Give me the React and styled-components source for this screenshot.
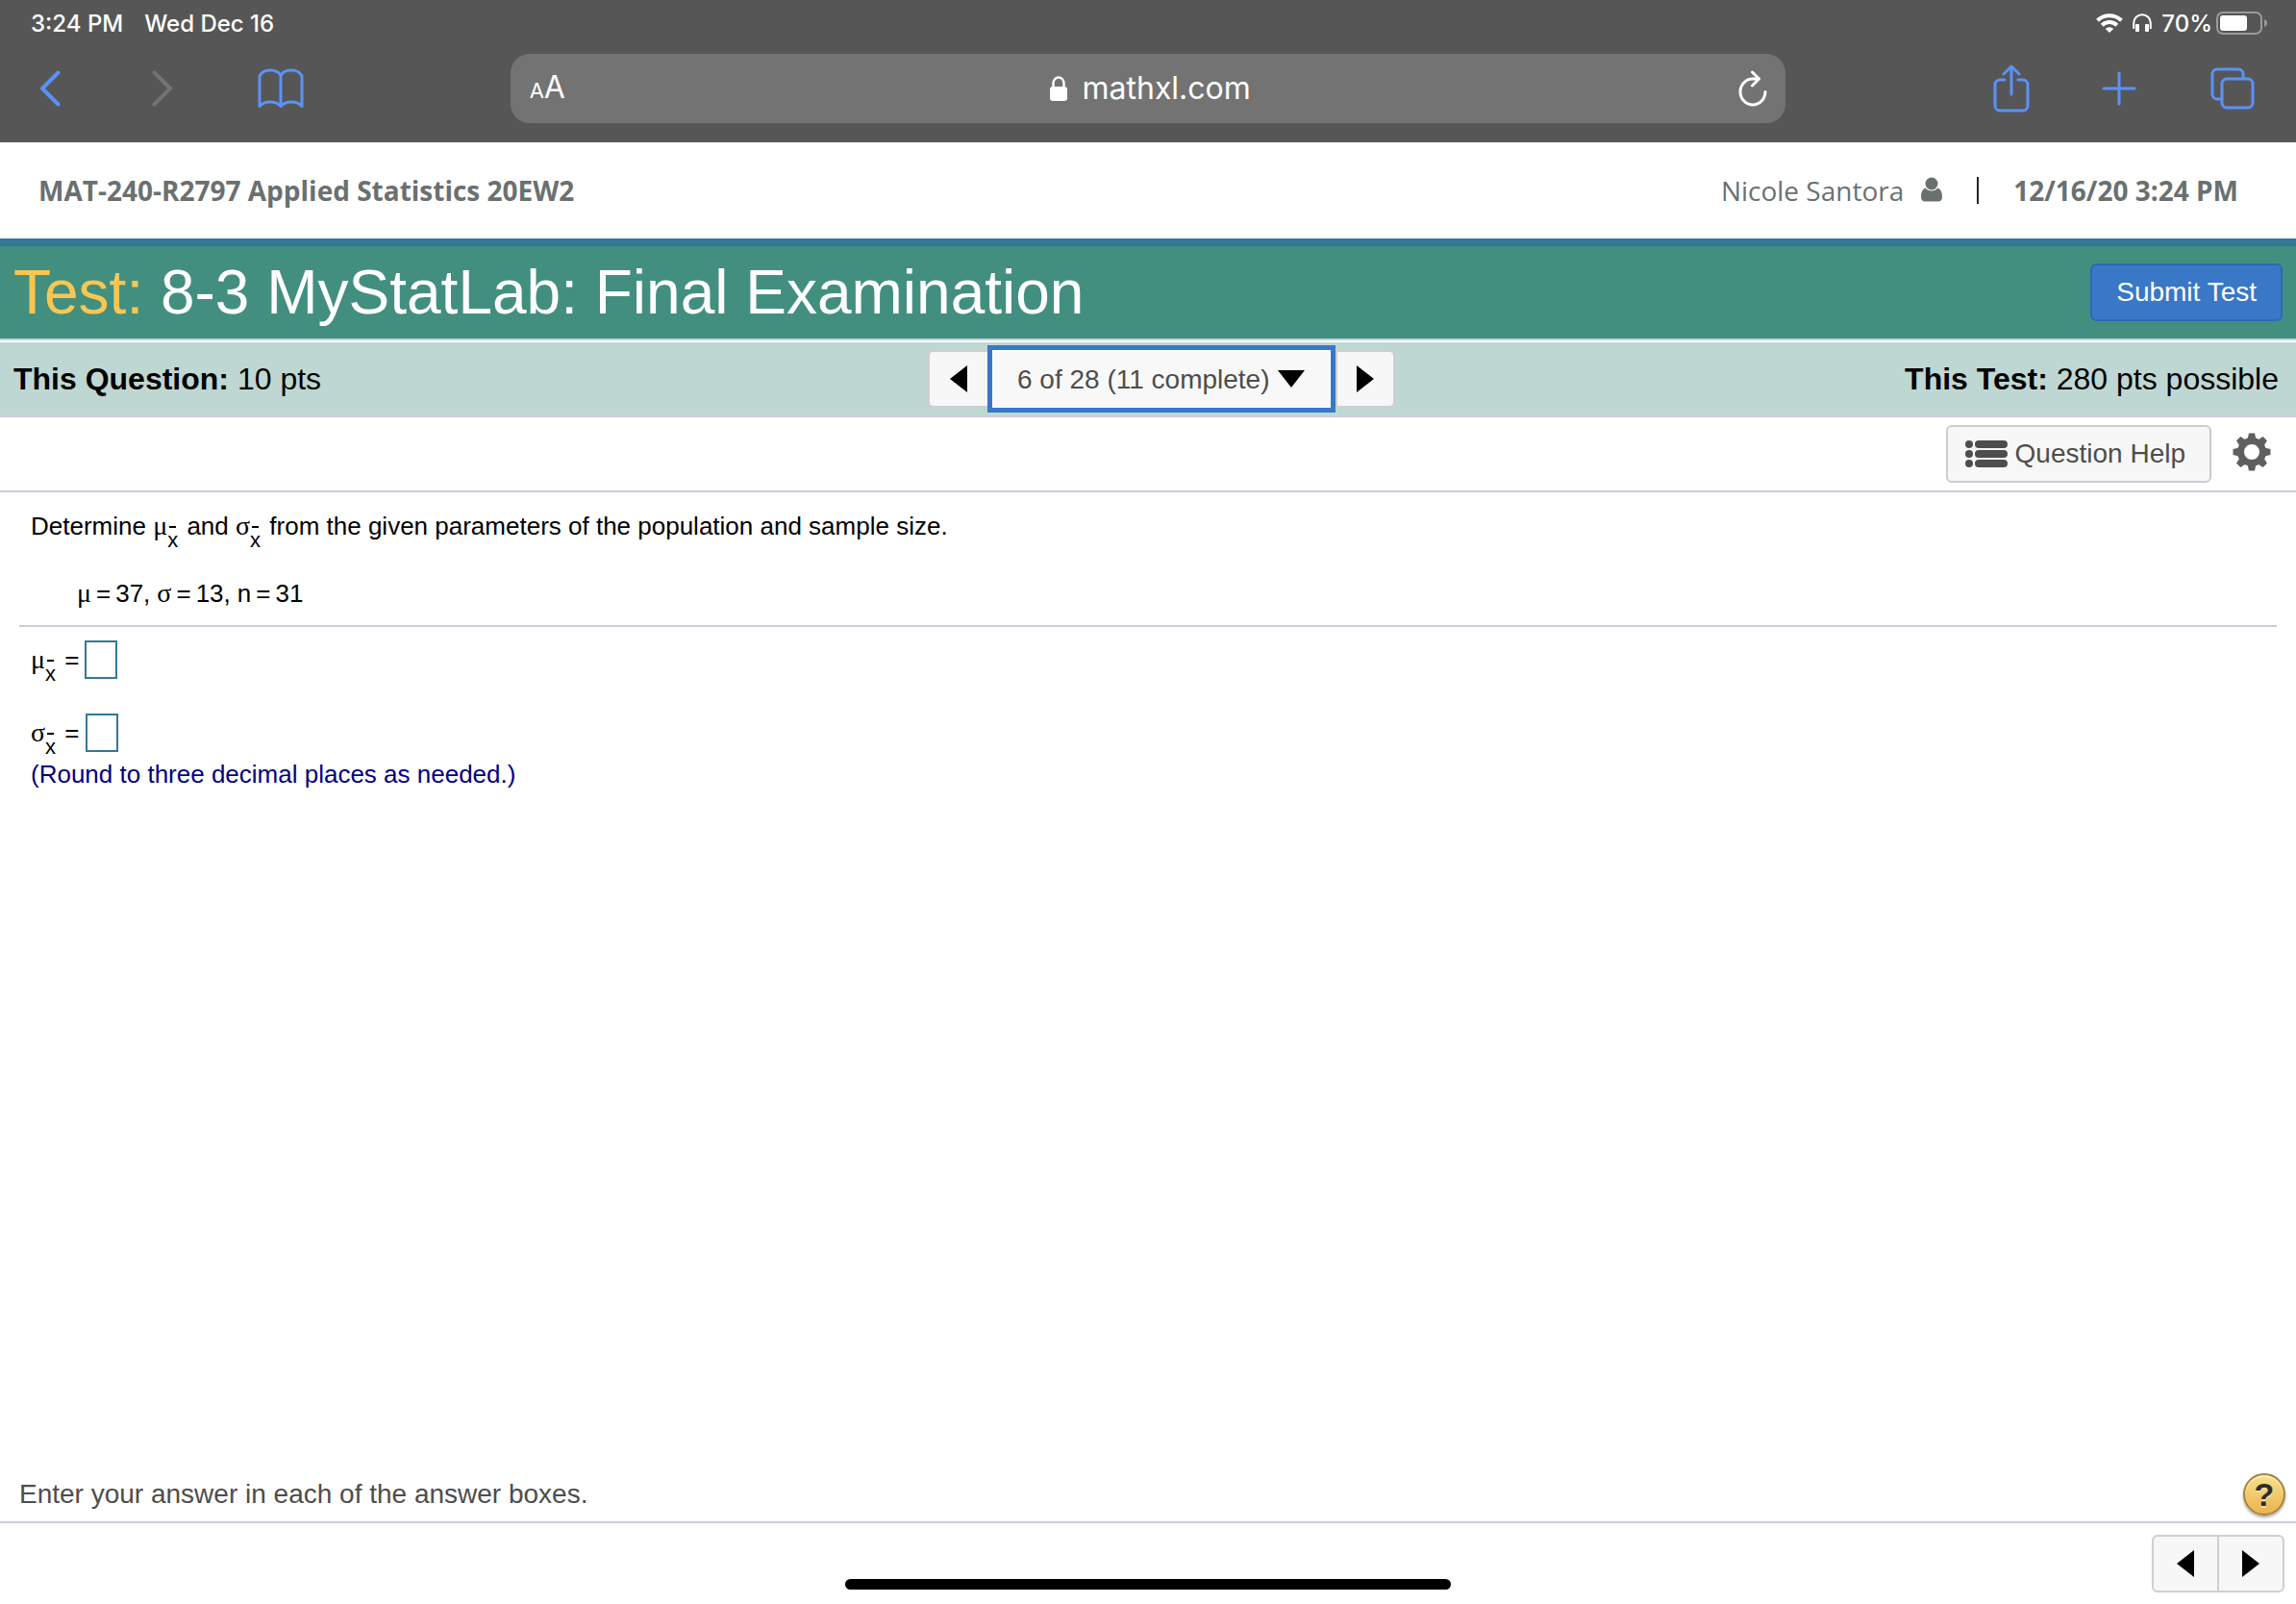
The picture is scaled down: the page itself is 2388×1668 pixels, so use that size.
import React, { useState } from 'react';
import styled, { createGlobalStyle } from 'styled-components';

const GlobalStyle = createGlobalStyle`
  * {
    box-sizing: border-box;
  }
  body {
    margin: 0;
    background-color: #fff;
    font-family: 'Liberation Sans', Arial, sans-serif;
  }
  svg {
    display: block;
    flex-shrink: 0;
  }
`;

const Page = styled.div`
  display: flex;
  flex-direction: column;
  min-height: 100vh;
`;

/* ---------- browser bar ---------- */

const BrowserBar = styled.header`
  background-color: #565656;
  color: #fff;
  font-family: Inter, sans-serif;
`;

const StatusRow = styled.div`
  display: flex;
  justify-content: space-between;
  height: 48px;
  padding: 0 29px 0 32px;
  font-size: 24px;
  font-weight: 500;
`;

const StatusGroup = styled.div`
  display: flex;
  align-items: center;
  gap: ${(props) => props.$gap}px;
`;

const NavRow = styled.nav`
  display: grid;
  grid-template-columns: 2fr 5fr 2fr;
  align-items: start;
  height: 100px;
  padding-top: 8px;
`;

const NavGroup = styled.div`
  display: flex;
  align-items: center;
  height: 72px;
  gap: ${(props) => (props.$right ? 68 : 73)}px;
  justify-content: ${(props) => (props.$right ? 'flex-end' : 'flex-start')};
  padding: ${(props) => (props.$right ? '0 38px 0 0' : '0 0 0 30px')};
`;

const IconButton = styled.button`
  display: flex;
  align-items: center;
  justify-content: center;
  width: ${(props) => props.$width || 44}px;
  height: 56px;
  padding: 0;
  border: none;
  background: none;
  color: ${(props) => props.$color || '#5a92f7'};
  cursor: pointer;
`;

const AddressBar = styled.div`
  display: grid;
  grid-template-columns: 1fr auto 1fr;
  align-items: center;
  height: 72px;
  padding: 0 12px 0 20px;
  border-radius: 20px;
  background-color: #737373;
`;

const ReaderButton = styled.button`
  justify-self: start;
  padding: 0;
  border: none;
  background: none;
  color: #fff;
  font-family: Inter, sans-serif;
  font-size: 32px;
  line-height: 40px;
  cursor: pointer;
`;

const SmallA = styled.span`
  font-size: 22px;
`;

const Address = styled.label`
  display: flex;
  align-items: center;
  gap: 15px;
`;

const AddressInput = styled.input`
  width: 178px;
  padding: 0;
  border: none;
  outline: none;
  background: none;
  color: #fff;
  font-family: Inter, sans-serif;
  font-size: 32px;
  line-height: 40px;
`;

const ReloadButton = styled(IconButton)`
  justify-self: end;
`;

/* ---------- course header ---------- */

const CourseHeader = styled.div`
  display: flex;
  align-items: center;
  justify-content: space-between;
  height: 108px;
  padding: 0 60px 0 40px;
  border-bottom: 8px solid #337896;
  color: #6a7070;
  font-family: 'Open Sans', sans-serif;
  font-size: 28px;
  line-height: 40px;
`;

const UserInfo = styled.div`
  display: flex;
  align-items: center;
`;

const UserIcon = styled.svg`
  margin-left: 18px;
`;

const Separator = styled.span`
  width: 2px;
  height: 28px;
  margin: 0 36px;
  background-color: #252525;
`;

const TitleBar = styled.div`
  display: flex;
  align-items: center;
  justify-content: space-between;
  height: 98px;
  padding: 0 14px;
  border-bottom: 2px solid #c9ced9;
  background-color: #428f80;
`;

const TestTitle = styled.h1`
  margin: 0;
  color: #fff;
  font-size: 64px;
  font-weight: 300;
  line-height: 72px;
`;

const TitlePrefix = styled.span`
  color: #f9c651;
`;

const SubmitButton = styled.button`
  height: 60px;
  padding: 0 25px;
  border: 2px solid #3068b1;
  border-radius: 6px;
  background-color: #3878c7;
  color: #fff;
  font-family: inherit;
  font-size: 28px;
  cursor: pointer;
`;

const QuestionBar = styled.div`
  display: grid;
  grid-template-columns: 1fr auto 1fr;
  align-items: center;
  height: 78px;
  margin-top: 2px;
  padding: 0 18px 0 14px;
  border-bottom: 2px solid #c9ced9;
  background-color: #bfd7d2;
  font-size: 32px;
`;

const Points = styled.span`
  text-align: ${(props) => (props.$right ? 'right' : 'left')};
`;

const Pager = styled.div`
  display: flex;
  align-items: center;
  padding-left: 32px;
`;

const PagerButton = styled.button`
  display: flex;
  align-items: center;
  justify-content: center;
  width: ${(props) => props.$width || 62}px;
  height: 60px;
  padding: 0;
  border: 2px solid #cfcfcf;
  background-color: #f7f7f7;
  color: #000;
  cursor: pointer;
`;

const PrevButton = styled(PagerButton)`
  border-right: none;
  border-radius: 6px 0 0 6px;
`;

const NextButton = styled(PagerButton)`
  border-radius: 0 6px 6px 0;
`;

const SelectWrap = styled.label`
  display: grid;
  align-items: center;
  > * {
    grid-area: 1 / 1;
  }
  > svg {
    justify-self: end;
    margin-right: 32px;
    pointer-events: none;
  }
`;

const QuestionSelect = styled.select`
  appearance: none;
  width: 362px;
  height: 70px;
  padding: 0 0 0 26px;
  border: 5px solid #3878c7;
  border-radius: 0;
  outline: none;
  box-shadow: inset 0 0 0 2px #fff;
  background-color: #f8f8f8;
  color: #4d4d4d;
  font-family: inherit;
  font-size: 28px;
`;

const ToolRow = styled.div`
  display: flex;
  align-items: flex-start;
  justify-content: flex-end;
  gap: 22px;
  height: 78px;
  padding: 8px 26px 0 0;
  border-bottom: 2px solid #cbcedb;
`;

const HelpButton = styled.button`
  display: flex;
  align-items: center;
  gap: 8px;
  height: 60px;
  padding: 0 25px 0 18px;
  border: 2px solid #ccc;
  border-radius: 6px;
  background-color: #f7f7f7;
  color: #4d4d4d;
  font-family: inherit;
  font-size: 28px;
  cursor: pointer;
`;

const SettingsButton = styled(IconButton)`
  width: 40px;
`;

/* ---------- question ---------- */

const Question = styled.main`
  flex: 1;
  padding: 20px 20px 0;
  color: #000;
  font-size: 26px;
  line-height: 30px;
`;

const Prompt = styled.p`
  margin: 0 12px 40px;
`;

const Parameters = styled.p`
  display: flex;
  gap: 7px;
  margin: 0 60px 18px;
`;

const Equation = styled.span`
  display: flex;
  gap: 5px;
`;

const Greek = styled.span`
  font-family: 'Liberation Serif', serif;
  font-size: 28px;
`;

/* subscript x with a short bar over it */
const XBar = styled.span`
  display: inline-block;
  margin: 0 2px -12px 0;
  vertical-align: -13px;
  font-size: 22px;
  line-height: 22px;
  &::before {
    content: '';
    display: block;
    width: 7px;
    height: 2px;
    margin: 0 auto 2px;
    background-color: #000;
  }
`;

const Rule = styled.hr`
  height: 2px;
  margin: 0 0 14px;
  border: none;
  background-color: #cbcedb;
`;

const AnswerRow = styled.label`
  display: flex;
  align-items: center;
  gap: 6px;
  height: 40px;
  margin: 0 12px 36px;
`;

const AnswerInput = styled.input`
  width: 34px;
  height: 40px;
  padding: 0 4px;
  border: 2px solid #337896;
  border-radius: 0;
  outline: none;
  background-color: #fff;
  font-family: inherit;
  font-size: 26px;
`;

const Note = styled.p`
  margin: -28px 12px 0;
  color: #00007f;
`;

/* ---------- footer ---------- */

const HintRow = styled.div`
  display: flex;
  align-items: center;
  justify-content: space-between;
  height: 62px;
  padding: 4px 11px 0 20px;
  border-bottom: 2px solid #cbcedb;
  color: #4d4d4d;
  font-size: 28px;
`;

const RoundHelp = styled.button`
  width: 44px;
  height: 44px;
  padding: 0;
  border: 2px solid #a8833a;
  border-radius: 50%;
  background: linear-gradient(#f9e08c, #e9b450);
  box-shadow: 0 2px 3px rgba(0, 0, 0, 0.35), inset 0 2px 1px #fdf0bd;
  color: #2e2e2e;
  font-family: inherit;
  font-size: 34px;
  font-weight: 700;
  line-height: 38px;
  text-shadow: 0 2px 0 #f9dfa0;
  cursor: pointer;
`;

const Footer = styled.footer`
  display: flex;
  justify-content: flex-end;
  height: 84px;
  padding: 12px;
`;

const HomeIndicator = styled.div`
  position: fixed;
  bottom: 15px;
  left: 50%;
  width: 630px;
  height: 11px;
  margin-left: -315px;
  border-radius: 6px;
  background-color: #000;
`;

const Stroke = ({ width, height, strokeWidth = 4, children }) => (
  <svg
    width={width}
    height={height}
    viewBox={`0 0 ${width} ${height}`}
    fill="none"
    stroke="currentColor"
    strokeWidth={strokeWidth}
    strokeLinecap="round"
    strokeLinejoin="round"
    aria-hidden="true"
  >
    {children}
  </svg>
);

const LeftTriangle = () => (
  <svg width="18" height="28" viewBox="0 0 18 28" aria-hidden="true">
    <path d="M18 0v28L0 14z" fill="currentColor" />
  </svg>
);

const RightTriangle = () => (
  <svg width="18" height="28" viewBox="0 0 18 28" aria-hidden="true">
    <path d="M0 0v28l18-14z" fill="currentColor" />
  </svg>
);

const gearTeeth = [0, 45, 90, 135, 180, 225, 270, 315];

const App = () => {
  const [url, setUrl] = useState('mathxl.com');
  const [answers, setAnswers] = useState({ mean: '', deviation: '' });

  const handleChange = (e) => {
    setAnswers({ ...answers, [e.target.name]: e.target.value });
  };

  return (
    <Page>
      <GlobalStyle />
      <BrowserBar>
        <StatusRow>
          <StatusGroup $gap={22}>
            <span>3:24 PM</span>
            <span>Wed Dec 16</span>
          </StatusGroup>
          <StatusGroup $gap={10}>
            <svg width="28" height="20" viewBox="0 0 28 20" fill="none" stroke="#fff" strokeWidth="4" aria-hidden="true">
              <path d="M1.5 7.2a18 18 0 0 1 25 0" />
              <path d="M6.2 12.2a11.2 11.2 0 0 1 15.6 0" />
              <path d="M14 20l-4.2-4.1a6 6 0 0 1 8.4 0z" fill="#fff" stroke="none" />
            </svg>
            <svg width="20" height="20" viewBox="0 0 20 20" aria-hidden="true">
              <path d="M1.2 16V10a8.8 8.8 0 0 1 17.6 0v6" fill="none" stroke="#fff" strokeWidth="2" />
              <rect x="3" y="11" width="4" height="8" rx="1" fill="#fff" />
              <rect x="13" y="11" width="4" height="8" rx="1" fill="#fff" />
            </svg>
            <StatusGroup $gap={4}>
              <span>70%</span>
              <svg width="54" height="24" viewBox="0 0 54 24" aria-hidden="true">
                <rect x="1" y="1" width="46" height="22" rx="6" fill="none" stroke="#9b9b9b" strokeWidth="2" />
                <rect x="4" y="4" width="28" height="16" rx="3" fill="#fff" />
                <path d="M50 8c4 1.5 4 6.500 0 8z" fill="#9b9b9b" />
              </svg>
            </StatusGroup>
          </StatusGroup>
        </StatusRow>
        <NavRow>
          <NavGroup>
            <IconButton aria-label="Back">
              <Stroke width={22} height={38}>
                <path d="M19.500 2.500L3 19l16.500 16.500" />
              </Stroke>
            </IconButton>
            <IconButton aria-label="Forward" $color="#737373">
              <Stroke width={22} height={38}>
                <path d="M2.500 2.500L19 19 2.500 35.500" />
              </Stroke>
            </IconButton>
            <IconButton aria-label="Bookmarks" $width={56}>
              <Stroke width={48} height={42} strokeWidth={3}>
                <path d="M24 7.500C20 .2 6 .2 2 8v31.500c5-6 17-6 22 0 5-6 17-6 22 0V8C42 .2 28 .2 24 7.500zM24 7.500v32" />
              </Stroke>
            </IconButton>
          </NavGroup>
          <AddressBar>
            <ReaderButton aria-label="Reader options">
              <SmallA>A</SmallA>A
            </ReaderButton>
            <Address>
              <svg width="18" height="26" viewBox="0 0 18 26" aria-hidden="true">
                <rect y="11" width="18" height="15" rx="3" fill="#fff" />
                <path d="M3.500 12V7.500a5.500 6 0 0 1 11 0V12" fill="none" stroke="#fff" strokeWidth="2.4" />
              </svg>
              <AddressInput
                type="text"
                aria-label="Address"
                value={url}
                onChange={(e) => setUrl(e.target.value)}
              />
            </Address>
            <ReloadButton aria-label="Reload" $color="#fff">
              <Stroke width={30} height={38} strokeWidth={3}>
                <path d="M28 22.500A13 13.500 0 1 1 15 9h6M14.500 2l7 7-7 7" />
              </Stroke>
            </ReloadButton>
          </AddressBar>
          <NavGroup $right>
            <IconButton aria-label="Share">
              <Stroke width={38} height={50} strokeWidth={3}>
                <path d="M12 16H7a5 5 0 0 0-5 5v22a5 5 0 0 0 5 5h24a5 5 0 0 0 5-5V21a5 5 0 0 0-5-5h-5M19 31V2M11 10l8-8 8 8" />
              </Stroke>
            </IconButton>
            <IconButton aria-label="New tab">
              <Stroke width={36} height={36} strokeWidth={3}>
                <path d="M18 2v32M2 18h32" />
              </Stroke>
            </IconButton>
            <IconButton aria-label="Tabs" $width={56}>
              <Stroke width={46} height={44} strokeWidth={3}>
                <rect x="12" y="12" width="32" height="30" rx="5" />
                <path d="M12 33H7a5 5 0 0 1-5-5V7a5 5 0 0 1 5-5h22a5 5 0 0 1 5 5v5" />
              </Stroke>
            </IconButton>
          </NavGroup>
        </NavRow>
      </BrowserBar>

      <CourseHeader>
        <strong>MAT-240-R2797 Applied Statistics 20EW2</strong>
        <UserInfo>
          <span>Nicole Santora</span>
          <UserIcon width="22" height="28" viewBox="0 0 22 28" fill="#6a7070" aria-hidden="true">
            <circle cx="11" cy="7" r="6.5" />
            <path d="M4.500 11.500C1.500 12.500 0 16 0 21c0 3 2 4.500 4 4.500h14c2 0 4-1.500 4-4.500 0-5-1.500-8.500-4.500-9.500-3 4-10 4-13 0z" />
          </UserIcon>
          <Separator />
          <strong>12/16/20 3:24 PM</strong>
        </UserInfo>
      </CourseHeader>

      <TitleBar>
        <TestTitle>
          <TitlePrefix>Test:</TitlePrefix> 8-3 MyStatLab: Final Examination
        </TestTitle>
        <SubmitButton>Submit Test</SubmitButton>
      </TitleBar>

      <QuestionBar>
        <Points>
          <b>This Question:</b> 10 pts
        </Points>
        <Pager>
          <PrevButton aria-label="Previous question">
            <LeftTriangle />
          </PrevButton>
          <SelectWrap>
            <QuestionSelect aria-label="Question">
              <option>6 of 28 (11 complete)</option>
            </QuestionSelect>
            <svg width="28" height="18" viewBox="0 0 28 18" aria-hidden="true">
              <path d="M0 0h28L14 18z" />
            </svg>
          </SelectWrap>
          <NextButton aria-label="Next question">
            <RightTriangle />
          </NextButton>
        </Pager>
        <Points $right>
          <b>This Test:</b> 280 pts possible
        </Points>
      </QuestionBar>

      <ToolRow>
        <HelpButton>
          <svg width="44" height="30" viewBox="0 0 44 30" fill="currentColor" aria-hidden="true">
            {[0, 10, 20].map((y) => (
              <g key={y}>
                <circle cx="4" cy={y + 5} r="4" />
                <rect x="10" y={y + 1} width="34" height="8" rx="4" />
              </g>
            ))}
          </svg>
          Question Help
        </HelpButton>
        <SettingsButton aria-label="Settings" $color="#5f5f5f">
          <svg width="40" height="40" viewBox="-20 -20 40 40" aria-hidden="true">
            <circle r="11.5" fill="none" stroke="currentColor" strokeWidth="7" />
            {gearTeeth.map((angle) => (
              <path
                key={angle}
                d="M-4.500-13L-3-19.500h6L4.500-13z"
                fill="currentColor"
                transform={`rotate(${angle})`}
              />
            ))}
          </svg>
        </SettingsButton>
      </ToolRow>

      <Question>
        <Prompt>
          Determine <Greek>μ</Greek>
          <XBar>x</XBar> and <Greek>σ</Greek>
          <XBar>x</XBar> from the given parameters of the population and sample size.
        </Prompt>
        <Parameters>
          <Equation>
            <Greek>μ</Greek>
            <span>=</span>
            <span>37,</span>
          </Equation>
          <Equation>
            <Greek>σ</Greek>
            <span>=</span>
            <span>13,</span>
          </Equation>
          <Equation>
            <span>n</span>
            <span>=</span>
            <span>31</span>
          </Equation>
        </Parameters>
        <Rule />
        <AnswerRow>
          <span>
            <Greek>μ</Greek>
            <XBar>x</XBar> =
          </span>
          <AnswerInput name="mean" value={answers.mean} onChange={handleChange} />
        </AnswerRow>
        <AnswerRow>
          <span>
            <Greek>σ</Greek>
            <XBar>x</XBar> =
          </span>
          <AnswerInput name="deviation" value={answers.deviation} onChange={handleChange} />
        </AnswerRow>
        <Note>(Round to three decimal places as needed.)</Note>
      </Question>

      <HintRow>
        <span>Enter your answer in each of the answer boxes.</span>
        <RoundHelp aria-label="Help">?</RoundHelp>
      </HintRow>
      <Footer>
        <PrevButton $width={68} aria-label="Previous question">
          <LeftTriangle />
        </PrevButton>
        <NextButton $width={70} aria-label="Next question">
          <RightTriangle />
        </NextButton>
      </Footer>
      <HomeIndicator />
    </Page>
  );
};

export default App;
